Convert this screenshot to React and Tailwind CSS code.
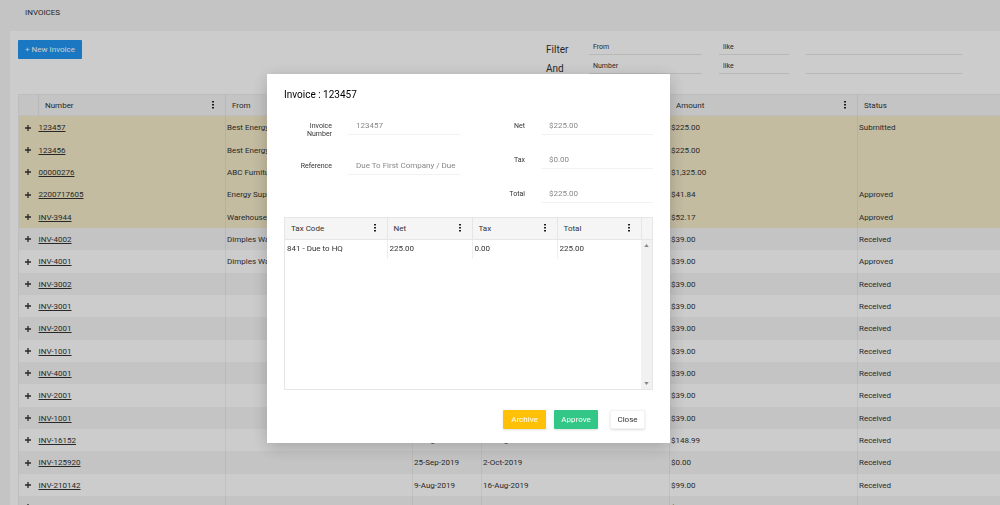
import React from 'react'
import { useState } from 'react';

const invoices = [
  { number: "123457", from: "Best Energy", amount: "$225.00", status: "Submitted", flagged: true },
  { number: "123456", from: "Best Energy", amount: "$225.00", status: "", flagged: true },
  { number: "00000276", from: "ABC Furniture", amount: "$1,325.00", status: "", flagged: true },
  { number: "2200717605", from: "Energy Supply", amount: "$41.84", status: "Approved", flagged: true },
  { number: "INV-3944", from: "Warehouse", amount: "$52.17", status: "Approved", flagged: true },
  { number: "INV-4002", from: "Dimples Warehouse", amount: "$39.00", status: "Received" },
  { number: "INV-4001", from: "Dimples Warehouse", amount: "$39.00", status: "Approved" },
  { number: "INV-3002", amount: "$39.00", status: "Received" },
  { number: "INV-3001", amount: "$39.00", status: "Received" },
  { number: "INV-2001", amount: "$39.00", status: "Received" },
  { number: "INV-1001", amount: "$39.00", status: "Received" },
  { number: "INV-4001", amount: "$39.00", status: "Received" },
  { number: "INV-2001", amount: "$39.00", status: "Received" },
  { number: "INV-1001", amount: "$39.00", status: "Received" },
  { number: "INV-16152", date: "9-Aug-2019", due: "16-Aug-2019", amount: "$148.99", status: "Received" },
  { number: "INV-125920", date: "25-Sep-2019", due: "2-Oct-2019", amount: "$0.00", status: "Received" },
  { number: "INV-210142", date: "9-Aug-2019", due: "16-Aug-2019", amount: "$99.00", status: "Received" },
  { number: "INV-125920", date: "25-Sep-2019", due: "2-Oct-2019", amount: "$178.20", status: "Received" },
];

const taxLines = [
  { code: "841 - Due to HQ", net: "225.00", tax: "0.00", total: "225.00" },
];

const Dots = () => (
  <svg viewBox="0 0 4 16" className="w-[2px] h-2 shrink-0" fill="currentColor">
    <rect width="4" height="3" />
    <rect y="6" width="4" height="3" />
    <rect y="12" width="4" height="3" />
  </svg>
)

const Plus = () => (
  <svg viewBox="0 0 12 12" className="w-[6px] h-[6px]" stroke="currentColor" strokeWidth="2.6">
    <path d="M6 0v12M0 6h12" />
  </svg>
)

const HeadCell = ({ label, menu }) => (
  <th className="border-r border-[#e6e6e6] last:border-r-0 font-normal text-left pl-[6px] pr-[11px] pt-[1px]">
    <div className="flex items-center justify-between">
      <span>{label}</span>
      {menu && (
        <button type="button" aria-label={`${label} menu`} className="pb-[2px] text-[#222]">
          <Dots />
        </button>
      )}
    </div>
  </th>
)

const Cell = ({ children }) => (
  <td className="border-l border-black/5 pl-[1px] pt-[2px]">{children}</td>
)

const FilterRow = ({ label, field }) => (
  <div className="flex items-start h-[19px]">
    <span className="w-[43px] pt-[3px] text-[10px] leading-[14px]">{label}</span>
    <select aria-label={`${label} field`} defaultValue={field} className="appearance-none w-[113px] h-[15px] pl-1 mr-[17px] text-[7px] leading-[14px] border-b border-[#e6e6e6] outline-none">
      <option>{field}</option>
    </select>
    <select aria-label={`${label} operator`} defaultValue="like" className="appearance-none w-[70px] h-[15px] pl-1 mr-[17px] text-[7px] leading-[14px] border-b border-[#e6e6e6] outline-none">
      <option>like</option>
    </select>
    <input type="text" aria-label={`${label} value`} className="w-[156px] h-[15px] text-[7px] border-b border-[#e6e6e6] outline-none" />
  </div>
)

const Field = ({ id, label, value }) => (
  <div className="flex items-start">
    <label htmlFor={id} className="w-[48px] pt-[5px] text-right text-[7px] leading-[8px] text-[#333]">{label}</label>
    <input
      id={id}
      type="text"
      defaultValue={value}
      className="w-[112px] h-[18px] ml-4 pl-2 text-[8px] text-[#888] border-b border-[#f2f2f2] outline-none"
    />
  </div>
)

const TaxTable = () => (
  <div className="border border-[#e6e6e6] h-[173px] flex flex-col text-[8px] leading-[12px] text-[#333]">
    <table className="w-full table-fixed">
      <colgroup>
        <col className="w-[102px]" />
        <col className="w-[85px]" />
        <col className="w-[85px]" />
        <col className="w-[84px]" />
        <col />
      </colgroup>
      <thead>
        <tr className="h-[21px] bg-[#f5f5f5] border-b border-[#e6e6e6]">
          <HeadCell label="Tax Code" menu />
          <HeadCell label="Net" menu />
          <HeadCell label="Tax" menu />
          <HeadCell label="Total" menu />
          <th></th>
        </tr>
      </thead>
    </table>
    <div className="flex flex-1 justify-between">
      <div className="flex-1">
        <table className="w-full table-fixed">
          <colgroup>
            <col className="w-[102px]" />
            <col className="w-[85px]" />
            <col className="w-[85px]" />
            <col />
          </colgroup>
          <tbody>
            {taxLines.map((line, index) => (
              <tr key={index} className="h-[19px]">
                <td className="border-r border-[#eee] pl-[2px]">{line.code}</td>
                <td className="border-r border-[#eee] pl-[2px]">{line.net}</td>
                <td className="border-r border-[#eee] pl-[2px]">{line.tax}</td>
                <td className="pl-[2px]">{line.total}</td>
              </tr>
            ))}
          </tbody>
        </table>
      </div>
      {/* Scroll track */}
      <div className="w-[11px] bg-[#f1f1f1] flex flex-col items-center justify-between py-1 text-[#888]">
        <svg viewBox="0 0 6 4" className="w-[5px] h-[3px]" fill="currentColor"><path d="M0 4l3-4 3 4z" /></svg>
        <svg viewBox="0 0 6 4" className="w-[5px] h-[3px]" fill="currentColor"><path d="M0 0l3 4 3-4z" /></svg>
      </div>
    </div>
  </div>
)

const InvoiceModal = ({ onClose }) => (
  <div className="fixed inset-0 bg-black/20 flex justify-center items-start pt-[74px] pr-[63px]">
    <div role="dialog" aria-label="Invoice : 123457" className="w-[403px] bg-white px-[17px] pt-[14px] pb-[14px] shadow-[0_4px_16px_rgba(0,0,0,0.2)]">
      <h2 className="text-[10px] leading-[14px] text-black">Invoice : 123457</h2>

      <div className="flex justify-between mt-[15px] h-[100px]">
        <div className="flex flex-col gap-[19px]">
          <Field id="number" label="Invoice Number" value="123457" />
          <Field id="reference" label="Reference" value="Due To First Company / Due" />
        </div>
        <div className="flex flex-col gap-4">
          <Field id="net" label="Net" value="$225.00" />
          <Field id="tax" label="Tax" value="$0.00" />
          <Field id="total" label="Total" value="$225.00" />
        </div>
      </div>

      <TaxTable />

      <div className="flex justify-end mt-5 pr-2">
        <button type="button" className="h-[19px] w-[43px] bg-[#ffc107] text-white text-[8px] rounded-[1px] shadow-sm">Archive</button>
        <button type="button" className="h-[19px] w-[44px] ml-2 bg-[#32c787] text-white text-[8px] rounded-[1px] shadow-sm">Approve</button>
        <button type="button" onClick={onClose} className="h-[19px] w-[35px] ml-3 bg-white text-[#333] text-[8px] rounded-[1px] border border-[#f2f2f2] shadow-sm">Close</button>
      </div>
    </div>
  </div>
)

const App = () => {
  const [open, setOpen] = useState(true);

  return (
    <div className="h-screen overflow-hidden bg-[#f5f5f5] text-[#333] font-[Roboto,sans-serif]">
      <h1 className="h-[31px] pl-[25px] pt-[6px] text-[8px] leading-[14px]">INVOICES</h1>
      <main className="ml-[10px] pl-2 pt-[9px] bg-white">
        <div className="flex justify-between h-[54px]">
          <button type="button" onClick={() => setOpen(true)} className="h-[19px] w-[64px] bg-[#2196f3] text-white text-[8px] rounded-[1px]">+ New Invoice</button>
          <div className="pr-[38px]">
            <FilterRow label="Filter" field="From" />
            <FilterRow label="And" field="Number" />
          </div>
        </div>

        {/* Invoice list */}
        <table className="w-full table-fixed text-[8px] leading-[12px] border-l border-[#eee]">
          <colgroup>
            <col className="w-[20px]" />
            <col className="w-[187px]" />
            <col className="w-[187px]" />
            <col className="w-[69px]" />
            <col className="w-[188px]" />
            <col className="w-[188px]" />
            <col />
          </colgroup>
          <thead>
            <tr className="h-[21px] bg-[#f5f5f5] border-y border-[#eee]">
              <HeadCell label="" />
              <HeadCell label="Number" menu />
              <HeadCell label="From" menu />
              <HeadCell label="" />
              <HeadCell label="" />
              <HeadCell label="Amount" menu />
              <HeadCell label="Status" />
            </tr>
          </thead>
          <tbody>
            {invoices.map((val, index) => (
              <tr key={index} className={`h-[22px] nth-[3n+1]:h-[23px] ${val.flagged ? 'bg-[#f5ebca]' : index % 2 ? 'bg-[#f5f5f5]' : 'bg-white'}`}>
                <td className="pl-[6px] pt-[1px]">
                  <button type="button" aria-label={`Expand ${val.number}`} className="block"><Plus /></button>
                </td>
                <td className="pt-[2px]"><a href="#" className="underline">{val.number}</a></td>
                <Cell>{val.from}</Cell>
                <Cell>{val.date}</Cell>
                <Cell>{val.due}</Cell>
                <Cell>{val.amount}</Cell>
                <Cell>{val.status}</Cell>
              </tr>
            ))}
          </tbody>
        </table>
      </main>
      {open && <InvoiceModal onClose={() => setOpen(false)} />}
    </div>
  )
}

export default App
